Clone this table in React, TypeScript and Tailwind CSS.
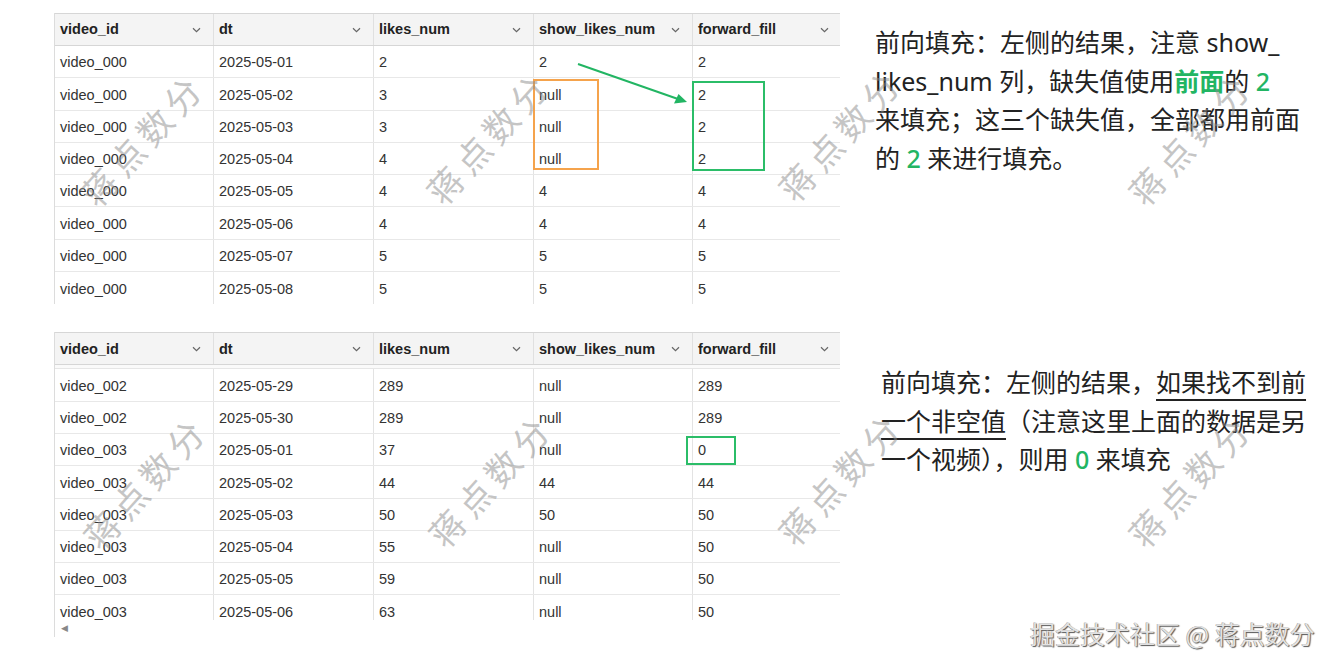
import React from "react";

type Row = [string, string, string, string, string];

const rowsTop: Row[] = [
  ["video_000", "2025-05-01", "2", "2", "2"],
  ["video_000", "2025-05-02", "3", "null", "2"],
  ["video_000", "2025-05-03", "3", "null", "2"],
  ["video_000", "2025-05-04", "4", "null", "2"],
  ["video_000", "2025-05-05", "4", "4", "4"],
  ["video_000", "2025-05-06", "4", "4", "4"],
  ["video_000", "2025-05-07", "5", "5", "5"],
  ["video_000", "2025-05-08", "5", "5", "5"],
];

const rowsBottom: Row[] = [
  ["video_002", "2025-05-29", "289", "null", "289"],
  ["video_002", "2025-05-30", "289", "null", "289"],
  ["video_003", "2025-05-01", "37", "null", "0"],
  ["video_003", "2025-05-02", "44", "44", "44"],
  ["video_003", "2025-05-03", "50", "50", "50"],
  ["video_003", "2025-05-04", "55", "null", "50"],
  ["video_003", "2025-05-05", "59", "null", "50"],
  ["video_003", "2025-05-06", "63", "null", "50"],
];

const columns = ["video_id", "dt", "likes_num", "show_likes_num", "forward_fill"];
const grid = "grid grid-cols-[159px_160px_160px_159px_148px]";

function Chevron() {
  return (
    <svg width="9" height="6" viewBox="0 0 9 6" className="shrink-0">
      <path d="M1 1.2 L4.5 4.6 L8 1.2" fill="none" stroke="#666" strokeWidth="1.2" />
    </svg>
  );
}

function Table({ rows, gap, cut }: { rows: Row[]; gap?: boolean; cut?: boolean }) {
  return (
    <div className="w-[786px] border-l border-[#dcdcdc] text-[14.5px]">
      <div className={`${grid} h-[33px] bg-[#f4f4f4] border-t border-b border-[#d6d6d6]`}>
        {columns.map((c) => (
          <div key={c} className="flex items-center justify-between pl-[5px] pr-[12px] pt-[1px] border-r border-[#e0e0e0] last:border-r-0">
            <span className="font-bold text-[#222]">{c}</span>
            <Chevron />
          </div>
        ))}
      </div>
      {gap && <div className="h-[4px] bg-[#fafafa] border-b border-[#e6e6e6]" />}
      <div className={cut ? "h-[251px] overflow-hidden" : ""}>
        {rows.map((r, i) => (
          <div key={i} className={`${grid} h-[32.3px] border-b border-[#e8e8e8] last:border-b-0`}>
            {r.map((v, j) => (
              <div key={j} className="flex items-center pl-[5px] pt-[3px] text-[#333] border-r border-[#e3e3e3] last:border-r-0">
                {v}
              </div>
            ))}
          </div>
        ))}
      </div>
      {cut && (
        <div className="h-[17px] flex items-center pl-[6px]">
          <span className="text-[9px] text-[#888]">◀</span>
        </div>
      )}
    </div>
  );
}

function Watermark({ x, y }: { x: number; y: number }) {
  return (
    <div
      className="absolute -translate-x-1/2 -translate-y-1/2 -rotate-[48deg] whitespace-nowrap text-[35px] tracking-[6px] text-[#8c8c8c]/50 pointer-events-none"
      style={{ left: x, top: y, fontFamily: '"Noto Sans CJK SC", sans-serif' }}
    >
      蒋点数分
    </div>
  );
}

const green = "text-[#22b563]";

export default function App() {
  return (
    <div
      className="relative w-[1333px] h-[668px] bg-white overflow-hidden"
      style={{ fontFamily: '"Liberation Sans", Arial, sans-serif' }}
    >
      <div className="pl-[54px] pt-[13px] flex flex-col gap-[28px]">
        {/* first example */}
        <div className="flex">
          <Table rows={rowsTop} />
          <div
            className="ml-[35px] mt-[10px] text-[25px] leading-[38.5px] text-[#222] whitespace-nowrap"
            style={{ fontFamily: '"Noto Sans", "Noto Sans CJK SC", sans-serif' }}
          >
            <div>前向填充：左侧的结果，注意 show_</div>
            <div>
              likes_num 列，缺失值使用<span className={`${green} font-bold`}>前面</span>的 <span className={`${green} font-medium`}>2</span>
            </div>
            <div>来填充；这三个缺失值，全部都用前面</div>
            <div>
              的 <span className={`${green} font-medium`}>2</span> 来进行填充。
            </div>
          </div>
        </div>

        {/* second example */}
        <div className="flex">
          <Table rows={rowsBottom} gap cut />
          <div
            className="ml-[41px] mt-[31px] text-[25px] leading-[38.5px] text-[#222] whitespace-nowrap"
            style={{ fontFamily: '"Noto Sans", "Noto Sans CJK SC", sans-serif' }}
          >
            <div>
              前向填充：左侧的结果，<span className="underline decoration-[1.5px] underline-offset-[7px]">如果找不到前</span>
            </div>
            <div>
              <span className="underline decoration-[1.5px] underline-offset-[7px]">一个非空值</span>（注意这里上面的数据是另
            </div>
            <div>
              一个视频），则用 <span className={`${green} font-medium`}>0</span> 来填充
            </div>
          </div>
        </div>
      </div>

      {/* annotations */}
      <div className="absolute left-[533px] top-[79px] w-[66px] h-[91px] border-2 border-[#f5a34c]" />
      <div className="absolute left-[692px] top-[81px] w-[73px] h-[90px] border-2 border-[#2bbd68]" />
      <div className="absolute left-[686px] top-[436px] w-[50px] h-[29px] border-2 border-[#2bbd68]" />
      <svg className="absolute left-0 top-0" width="1333" height="668">
        <line x1="578" y1="64" x2="678" y2="99" stroke="#22b563" strokeWidth="2" />
        <path d="M687 102 L674 103.5 L678.5 94 Z" fill="#22b563" />
      </svg>

      {/* watermarks */}
      <Watermark x={142} y={139} />
      <Watermark x={488} y={137} />
      <Watermark x={840} y={134} />
      <Watermark x={1190} y={138} />
      <Watermark x={145} y={482} />
      <Watermark x={490} y={480} />
      <Watermark x={840} y={478} />
      <Watermark x={1190} y={480} />

      <div
        className="absolute left-[1030px] top-[618px] text-[25px] leading-[30px] text-[#e2e2e2] whitespace-nowrap"
        style={{
          fontFamily: '"Noto Sans CJK SC", sans-serif',
          textShadow: "1px 1px 1px #555, -0.5px -0.5px 0 #999",
        }}
      >
        掘金技术社区 @ 蒋点数分
      </div>
    </div>
  );
}
